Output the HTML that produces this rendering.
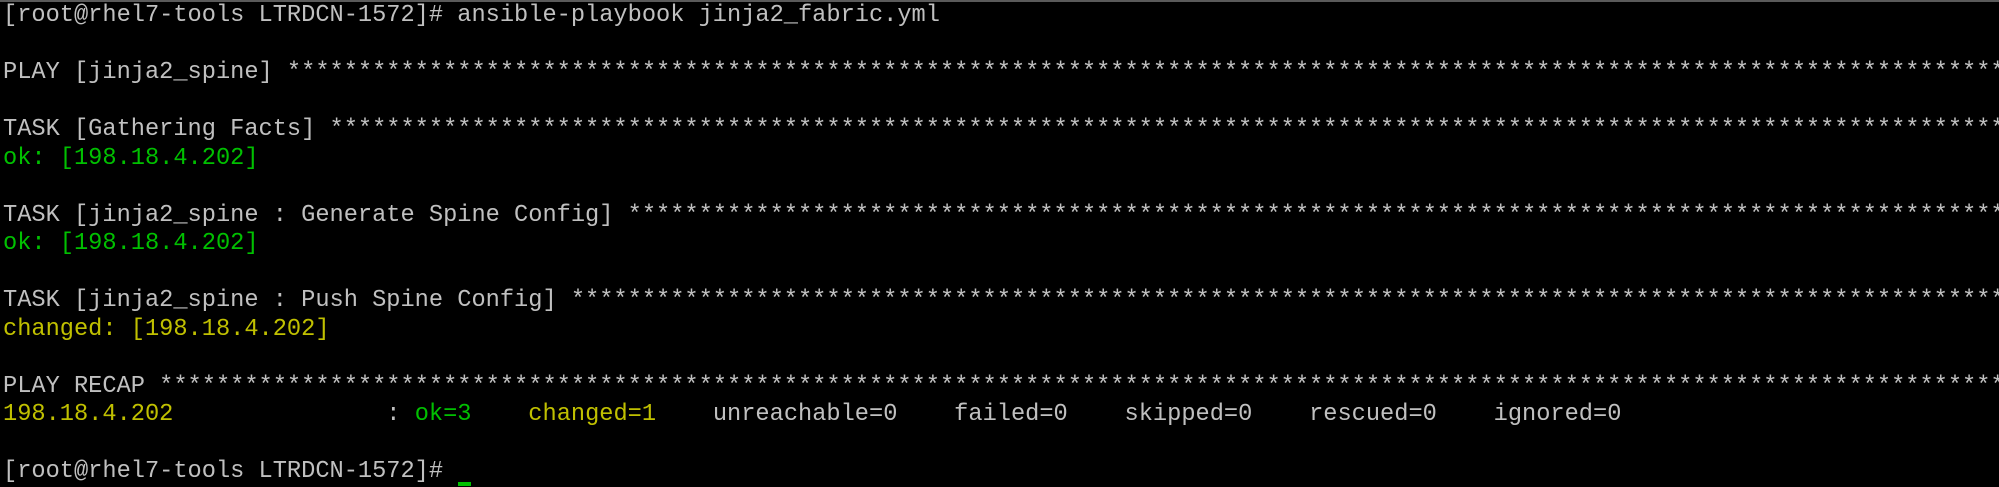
<!DOCTYPE html>
<html><head><meta charset="utf-8"><style>
html,body{margin:0;padding:0;background:#000;}
body{width:1999px;height:485px;overflow:hidden;position:relative;border-top:2px solid #5a5a5a;box-sizing:border-box;}
pre{margin:0;padding:0 0 0 3px;font-family:"Liberation Mono",monospace;font-size:23.67px;line-height:28.5px;color:#c0c0c0;white-space:pre;overflow:hidden;}
.g{color:#00c000}.y{color:#c0c000}
.cur{position:absolute;left:458px;top:480px;width:13px;height:4px;background:#00c000;}
</style></head><body>
<pre>[root@rhel7-tools LTRDCN-1572]# ansible-playbook jinja2_fabric.yml

PLAY [jinja2_spine] **************************************************************************************************************************************************

TASK [Gathering Facts] ***********************************************************************************************************************************************
<span class="g">ok: [198.18.4.202]</span>

TASK [jinja2_spine : Generate Spine Config] **************************************************************************************************************************
<span class="g">ok: [198.18.4.202]</span>

TASK [jinja2_spine : Push Spine Config] ******************************************************************************************************************************
<span class="y">changed: [198.18.4.202]</span>

PLAY RECAP ***********************************************************************************************************************************************************
<span class="y">198.18.4.202</span>               : <span class="g">ok=3</span>    <span class="y">changed=1</span>    unreachable=0    failed=0    skipped=0    rescued=0    ignored=0

[root@rhel7-tools LTRDCN-1572]# </pre>
<div class="cur"></div>
</body></html>
